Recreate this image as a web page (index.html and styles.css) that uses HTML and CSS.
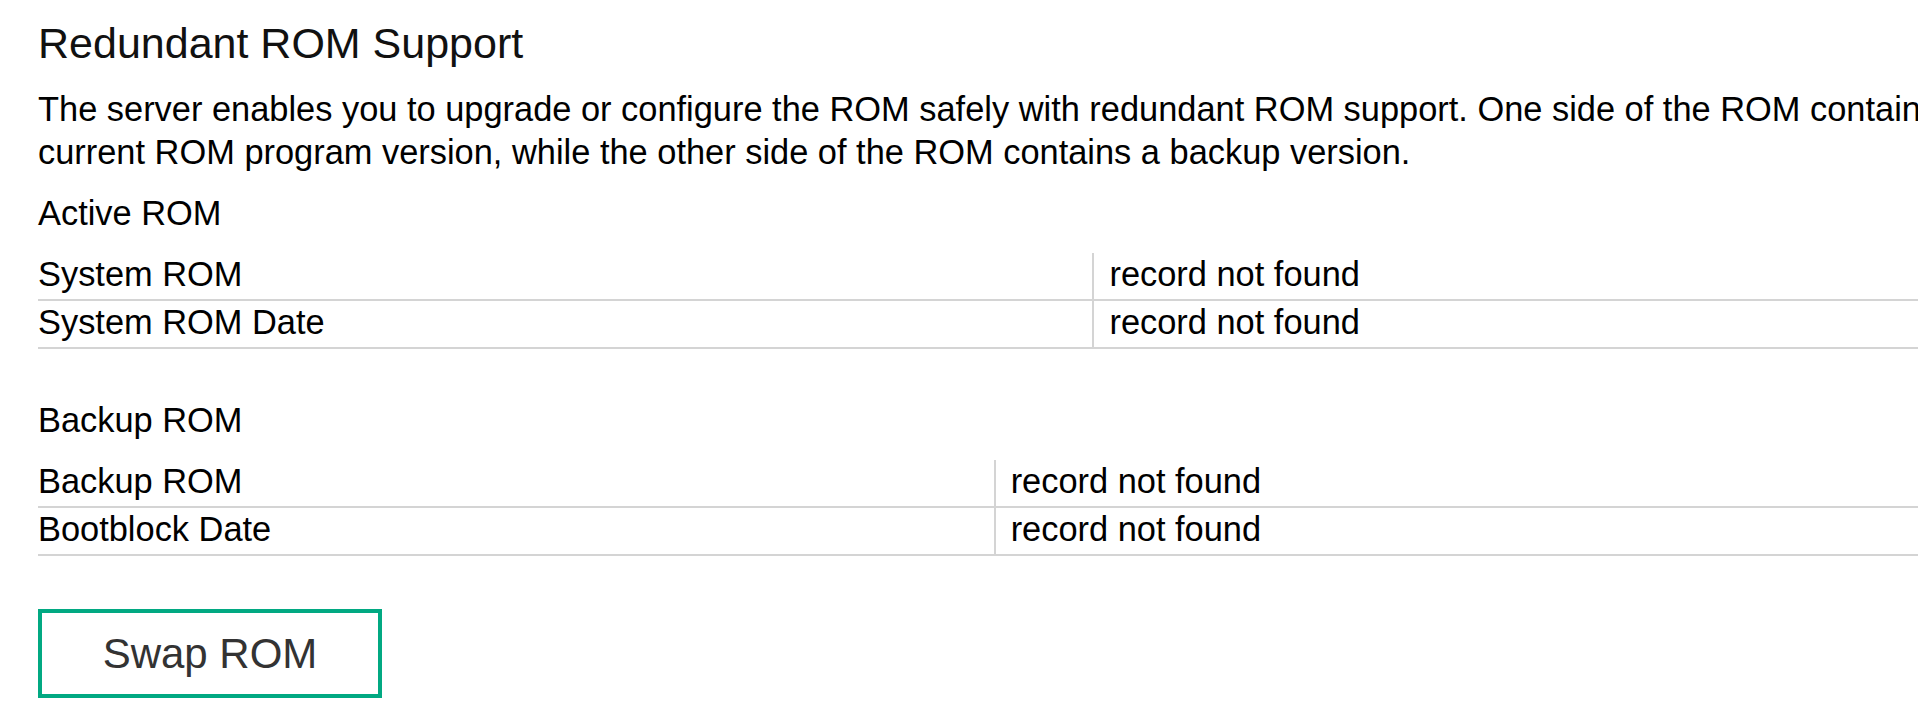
FILE: index.html
```html
<!DOCTYPE html>
<html lang="en">
<head>
<meta charset="utf-8">
<title>Redundant ROM Support</title>
<link rel="stylesheet" href="styles.css">
</head>
<body>
<main class="page">
  <h1 class="title">Redundant ROM Support</h1>
  <p class="intro">The server enables you to upgrade or configure the ROM safely with redundant ROM support. One side of the ROM contains the current ROM program version, while the other side of the ROM contains a backup version.</p>

  <h2 class="section-title">Active ROM</h2>
  <table class="info-table">
    <tr><td class="label">System ROM</td><td class="value">record not found</td></tr>
    <tr><td class="label">System ROM Date</td><td class="value">record not found</td></tr>
  </table>

  <h2 class="section-title section-gap">Backup ROM</h2>
  <table class="info-table">
    <tr><td class="label">Backup ROM</td><td class="value">record not found</td></tr>
    <tr><td class="label">Bootblock Date</td><td class="value">record not found</td></tr>
  </table>

  <button class="btn-swap" type="button">Swap ROM</button>
</main>
</body>
</html>
```

FILE: styles.css
```css
html, body {
  margin: 0;
  padding: 0;
  background: #ffffff;
  overflow: hidden;
}

body {
  font-family: "Liberation Sans", Arial, sans-serif;
  color: #000000;
}

.page {
  width: 1990px;
  padding: 18px 0 0 38px;
  display: flex;
  flex-direction: column;
  align-items: flex-start;
}

.title {
  margin: 0;
  font-size: 43px;
  line-height: 50px;
  font-weight: normal;
  color: #111111;
}

.intro {
  margin: 20px 0 0;
  font-size: 34.4px;
  line-height: 43px;
}

.section-title {
  margin: 20px 0 0;
  font-size: 34.4px;
  line-height: 39px;
  font-weight: normal;
}

.section-gap {
  margin-top: 52px;
}

.info-table {
  width: 2037px;
  margin-top: 20px;
  border-collapse: collapse;
  font-size: 34.4px;
}

.info-table td {
  padding: 3px 15px 7px 0;
  line-height: 36px;
  border-bottom: 2px solid #d4d4d4;
  white-space: nowrap;
}

.info-table td.value {
  padding-left: 15px;
  border-left: 2px solid #d4d4d4;
}

.btn-swap {
  margin-top: 53px;
  width: 344px;
  height: 89px;
  border: 4px solid #01a982;
  background: #ffffff;
  font-family: "Liberation Sans", Arial, sans-serif;
  font-size: 42px;
  color: #333333;
  padding: 0;
  cursor: pointer;
}
```
